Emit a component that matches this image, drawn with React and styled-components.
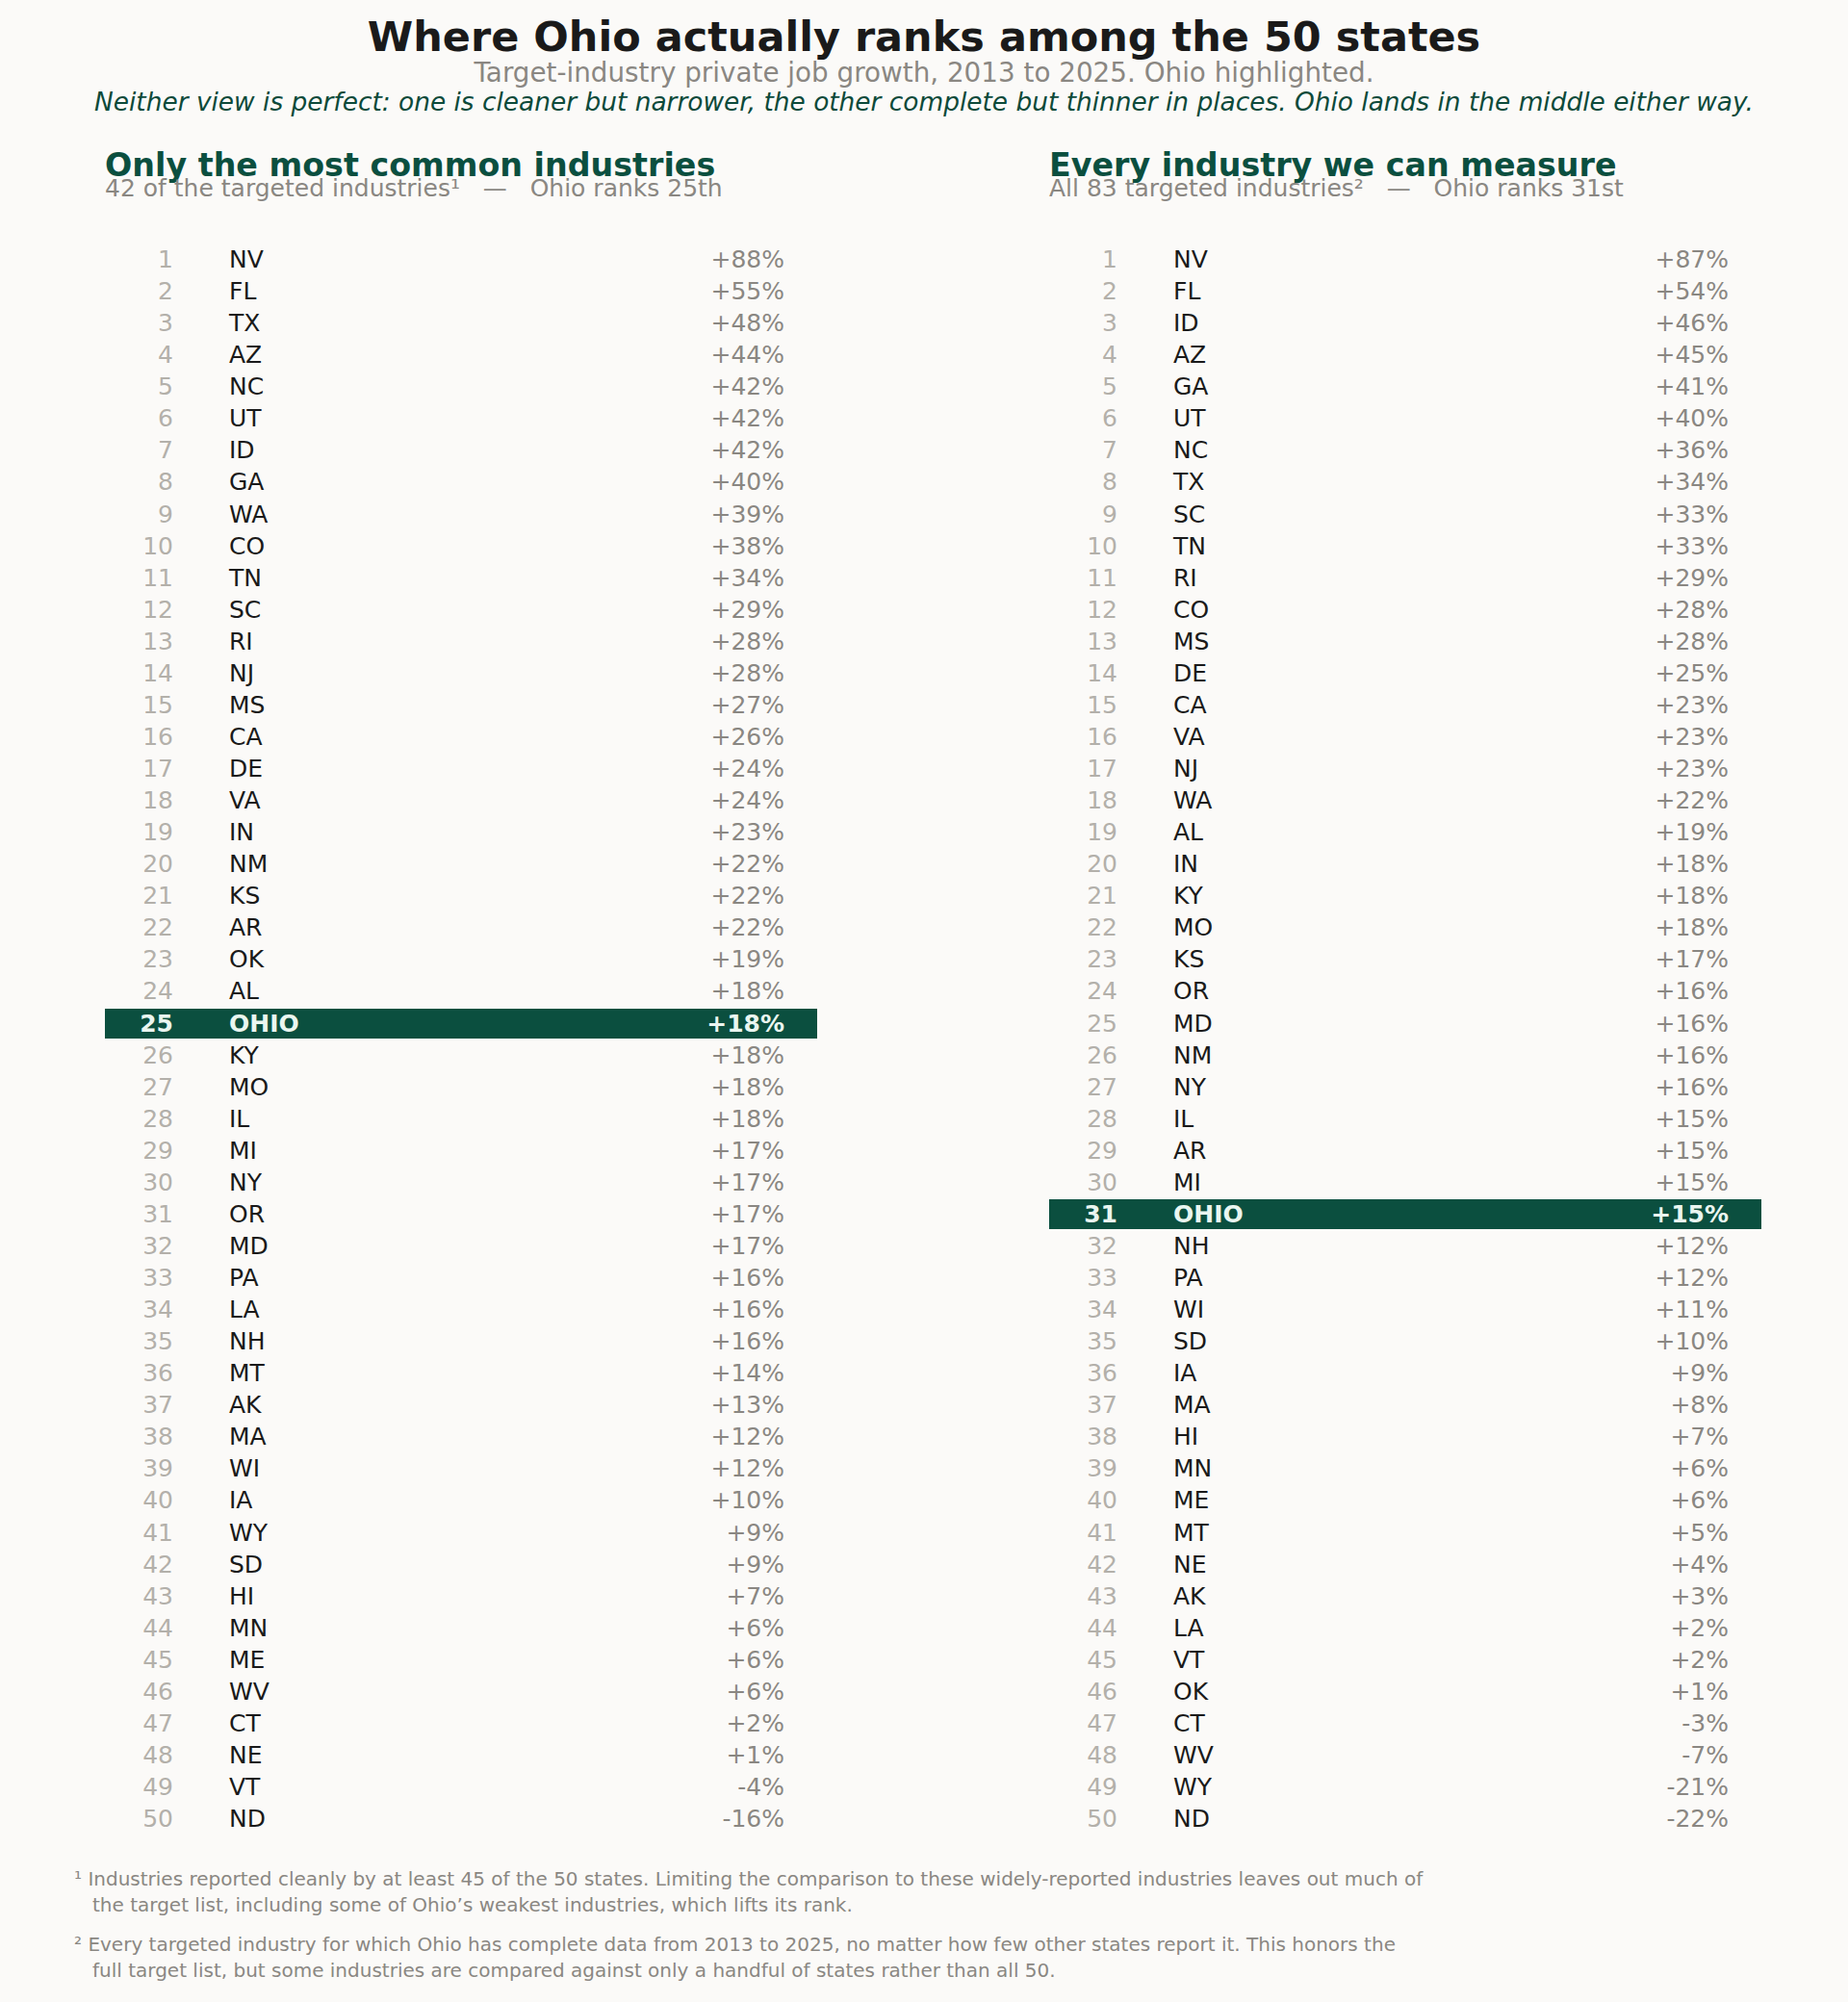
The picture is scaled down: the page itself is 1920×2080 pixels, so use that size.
import React from 'react';
import styled, { createGlobalStyle } from 'styled-components';

const GlobalStyle = createGlobalStyle`
  html, body {
    margin: 0;
    padding: 0;
    background: #fbfaf8;
  }
  body {
    font-family: "DejaVu Sans", "Liberation Sans", sans-serif;
  }
`;

const GREEN = '#0b4f3f';
const GRAY = '#8a8782';

const mostCommon = [
  ['NV', '+88%'], ['FL', '+55%'], ['TX', '+48%'], ['AZ', '+44%'], ['NC', '+42%'],
  ['UT', '+42%'], ['ID', '+42%'], ['GA', '+40%'], ['WA', '+39%'], ['CO', '+38%'],
  ['TN', '+34%'], ['SC', '+29%'], ['RI', '+28%'], ['NJ', '+28%'], ['MS', '+27%'],
  ['CA', '+26%'], ['DE', '+24%'], ['VA', '+24%'], ['IN', '+23%'], ['NM', '+22%'],
  ['KS', '+22%'], ['AR', '+22%'], ['OK', '+19%'], ['AL', '+18%'], ['OHIO', '+18%'],
  ['KY', '+18%'], ['MO', '+18%'], ['IL', '+18%'], ['MI', '+17%'], ['NY', '+17%'],
  ['OR', '+17%'], ['MD', '+17%'], ['PA', '+16%'], ['LA', '+16%'], ['NH', '+16%'],
  ['MT', '+14%'], ['AK', '+13%'], ['MA', '+12%'], ['WI', '+12%'], ['IA', '+10%'],
  ['WY', '+9%'], ['SD', '+9%'], ['HI', '+7%'], ['MN', '+6%'], ['ME', '+6%'],
  ['WV', '+6%'], ['CT', '+2%'], ['NE', '+1%'], ['VT', '-4%'], ['ND', '-16%']
];

const everyIndustry = [
  ['NV', '+87%'], ['FL', '+54%'], ['ID', '+46%'], ['AZ', '+45%'], ['GA', '+41%'],
  ['UT', '+40%'], ['NC', '+36%'], ['TX', '+34%'], ['SC', '+33%'], ['TN', '+33%'],
  ['RI', '+29%'], ['CO', '+28%'], ['MS', '+28%'], ['DE', '+25%'], ['CA', '+23%'],
  ['VA', '+23%'], ['NJ', '+23%'], ['WA', '+22%'], ['AL', '+19%'], ['IN', '+18%'],
  ['KY', '+18%'], ['MO', '+18%'], ['KS', '+17%'], ['OR', '+16%'], ['MD', '+16%'],
  ['NM', '+16%'], ['NY', '+16%'], ['IL', '+15%'], ['AR', '+15%'], ['MI', '+15%'],
  ['OHIO', '+15%'], ['NH', '+12%'], ['PA', '+12%'], ['WI', '+11%'], ['SD', '+10%'],
  ['IA', '+9%'], ['MA', '+8%'], ['HI', '+7%'], ['MN', '+6%'], ['ME', '+6%'],
  ['MT', '+5%'], ['NE', '+4%'], ['AK', '+3%'], ['LA', '+2%'], ['VT', '+2%'],
  ['OK', '+1%'], ['CT', '-3%'], ['WV', '-7%'], ['WY', '-21%'], ['ND', '-22%']
];

const Page = styled.div`
  width: 1920px;
  min-height: 2080px;
  box-sizing: border-box;
  padding-top: 15px;
  background: #fbfaf8;
`;

const Header = styled.header`
  display: flex;
  flex-direction: column;
  align-items: center;
`;

const Title = styled.h1`
  margin: 0;
  font-size: 43px;
  line-height: 46px;
  font-weight: bold;
  color: #1a1a1a;
`;

const Subtitle = styled.div`
  font-size: 27.8px;
  line-height: 30px;
  color: ${GRAY};
`;

const Note = styled.div`
  font-size: 26.4px;
  line-height: 30px;
  font-style: italic;
  color: #0d4a3a;
`;

const Columns = styled.div`
  display: grid;
  grid-template-columns: 740px 740px;
  column-gap: 241px;
  padding-left: 109px;
  margin-top: 37px;
`;

const Column = styled.section`
  display: flex;
  flex-direction: column;
`;

const Heading = styled.h2`
  margin: 0;
  font-size: 33.3px;
  line-height: 28px;
  font-weight: bold;
  color: ${GREEN};
`;

const SubLabel = styled.div`
  font-size: 25px;
  line-height: 20px;
  color: ${GRAY};
  white-space: pre;
`;

const List = styled.ol`
  list-style: none;
  margin: 47px 0 0;
  padding: 0;
`;

const Row = styled.li`
  display: flex;
  align-items: center;
  height: 33.07px;
  box-sizing: border-box;
  padding: 1px 0;
  background: ${p => (p.$ohio ? GREEN : 'transparent')};
  background-clip: content-box;
  font-size: 25px;
  font-weight: ${p => (p.$ohio ? 'bold' : 'normal')};
`;

const Rank = styled.span`
  width: 71px;
  text-align: right;
  color: ${p => (p.$ohio ? '#eaf6f0' : '#b3b0aa')};
`;

const State = styled.span`
  flex: 1;
  margin-left: 58px;
  color: ${p => (p.$ohio ? '#eaf6f0' : '#1a1a1a')};
`;

const Pct = styled.span`
  text-align: right;
  padding-right: 34px;
  color: ${p => (p.$ohio ? '#eaf6f0' : GRAY)};
`;

const Footnotes = styled.footer`
  padding-left: 77px;
  margin-top: 33px;
  display: flex;
  flex-direction: column;
  gap: 14px;
`;

const Footnote = styled.p`
  margin: 0;
  font-size: 20px;
  line-height: 27px;
  color: ${GRAY};
`;

const Continued = styled.span`
  display: block;
  padding-left: 19px;
`;

const Ranking = ({ heading, label, rows }) => (
  <Column>
    <Heading>{heading}</Heading>
    <SubLabel>{label}</SubLabel>
    <List>
      {rows.map(([state, pct], i) => {
        const ohio = state === 'OHIO';
        return (
          <Row key={state} $ohio={ohio}>
            <Rank $ohio={ohio}>{i + 1}</Rank>
            <State $ohio={ohio}>{state}</State>
            <Pct $ohio={ohio}>{pct}</Pct>
          </Row>
        );
      })}
    </List>
  </Column>
);

export default function App() {
  return (
    <Page>
      <GlobalStyle />
      <Header>
        <Title>Where Ohio actually ranks among the 50 states</Title>
        <Subtitle>Target-industry private job growth, 2013 to 2025. Ohio highlighted.</Subtitle>
        <Note>
          Neither view is perfect: one is cleaner but narrower, the other complete but thinner in places. Ohio lands in the middle either way.
        </Note>
      </Header>
      <Columns>
        <Ranking
          heading="Only the most common industries"
          label={'42 of the targeted industries¹   —   Ohio ranks 25th'}
          rows={mostCommon}
        />
        <Ranking
          heading="Every industry we can measure"
          label={'All 83 targeted industries²   —   Ohio ranks 31st'}
          rows={everyIndustry}
        />
      </Columns>
      <Footnotes>
        <Footnote>
          ¹ Industries reported cleanly by at least 45 of the 50 states. Limiting the comparison to these widely-reported industries leaves out much of
          <Continued>the target list, including some of Ohio’s weakest industries, which lifts its rank.</Continued>
        </Footnote>
        <Footnote>
          ² Every targeted industry for which Ohio has complete data from 2013 to 2025, no matter how few other states report it. This honors the
          <Continued>full target list, but some industries are compared against only a handful of states rather than all 50.</Continued>
        </Footnote>
      </Footnotes>
    </Page>
  );
}
